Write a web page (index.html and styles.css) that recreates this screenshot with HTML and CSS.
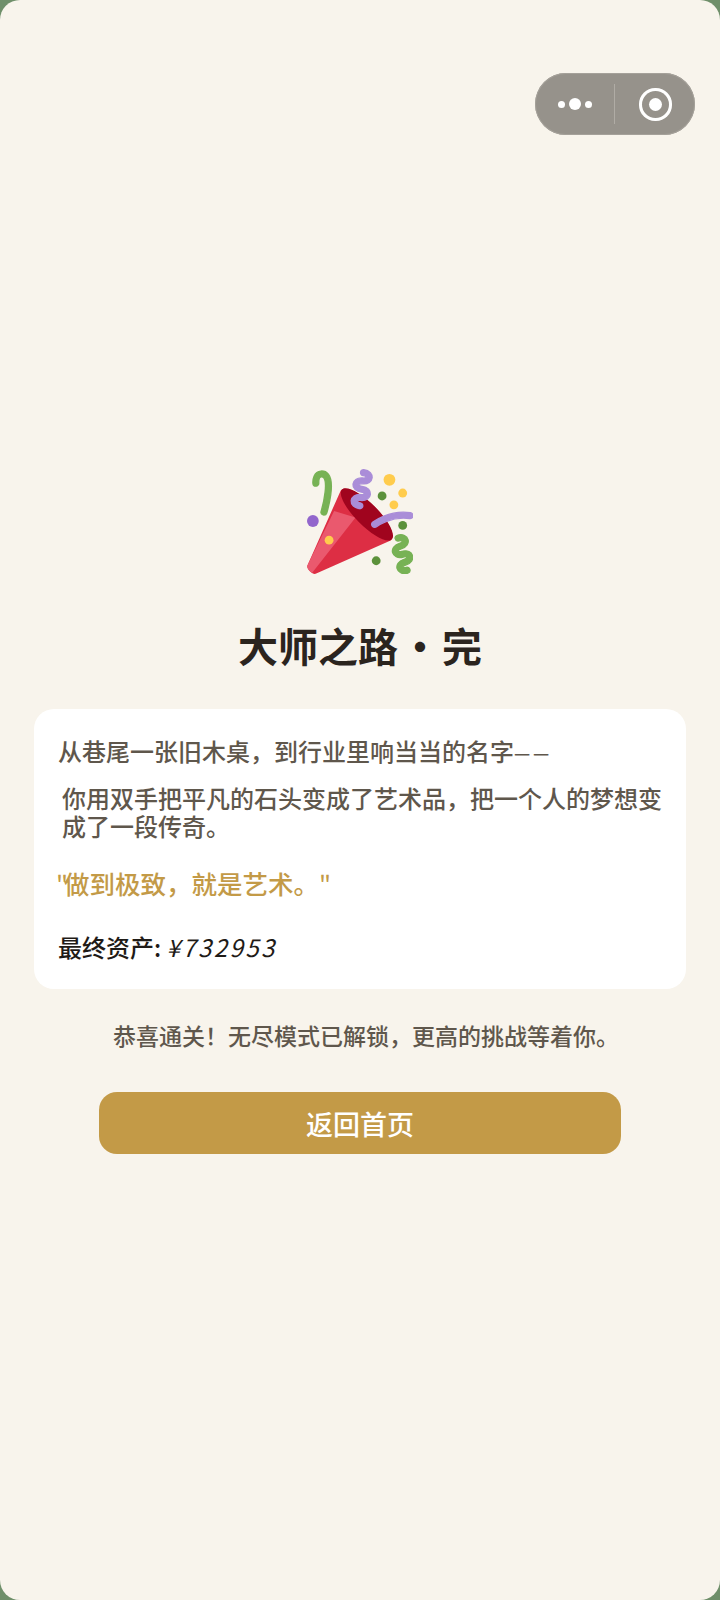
FILE: index.html
```html
<!DOCTYPE html>
<html>
<head>
  <meta charset="utf-8">
  <title>大师之路</title>
  <link rel="stylesheet" href="styles.css">
</head>
<body>
  <div class="screen">
    <div class="capsule">
      <div class="capsule-menu">
        <span class="dot"></span>
        <span class="dot dot-big"></span>
        <span class="dot"></span>
      </div>
      <div class="capsule-line"></div>
      <div class="capsule-close">
        <span class="close-inner"></span>
      </div>
    </div>

    <main class="content">
      <svg class="popper" viewBox="0 0 36 36">
        <path fill="#DD2E44" d="M11.626 7.488c-.112.112-.197.247-.268.395l-.008-.008L.134 33.141l.011.011c-.208.403.14 1.223.853 1.937.713.713 1.533 1.061 1.936.853l.01.01L28.21 24.735l-.008-.009c.147-.07.282-.155.395-.269 1.562-1.562-.971-6.627-5.656-11.313-4.687-4.686-9.752-7.218-11.315-5.656z"/>
        <path fill="#EA596E" d="M9.2 14.6L.416 32.506l-.282.635.011.011c-.208.403.14 1.223.853 1.937.232.232.473.408.709.557L16.5 16.8z"/>
        <path fill="#A0041E" d="M23.012 13.066c4.67 4.672 7.263 9.652 5.789 11.124-1.473 1.474-6.453-1.118-11.126-5.788-4.671-4.672-7.263-9.654-5.79-11.127 1.474-1.473 6.454 1.119 11.127 5.791z"/>
        <path class="streamer" fill="#AA8DD8" stroke="#AA8DD8" d="M18.59 13.609c-.199.161-.459.245-.734.215-.868-.094-1.598-.396-2.109-.873-.541-.505-.808-1.183-.735-1.862.128-1.192 1.324-2.286 3.363-2.066.793.085 1.147-.17 1.159-.292.014-.121-.277-.446-1.07-.532-.868-.094-1.598-.396-2.11-.873-.541-.505-.809-1.183-.735-1.862.13-1.192 1.325-2.286 3.362-2.065.578.062.883-.057 1.012-.134.103-.063.144-.123.148-.158.012-.121-.275-.446-1.07-.532-.549-.06-.947-.552-.886-1.102.059-.549.55-.946 1.101-.886 2.037.219 2.973 1.542 2.844 2.735-.13 1.194-1.325 2.286-3.364 2.067-.578-.063-.88.057-1.01.134-.103.062-.145.123-.149.157-.013.122.276.446 1.071.532 2.037.22 2.973 1.542 2.844 2.735-.129 1.192-1.324 2.286-3.362 2.065-.578-.062-.882.058-1.012.134-.104.064-.144.124-.148.158-.013.121.276.446 1.07.532.548.06.947.553.886 1.102-.028.274-.167.511-.366.671z"/>
        <path class="streamer" fill="#77B255" stroke="#77B255" d="M30.661 22.857c1.973-.557 3.334.323 3.658 1.478.324 1.154-.378 2.615-2.35 3.17-.77.216-1.001.584-.97.701.034.118.425.312 1.193.095 1.972-.555 3.333.325 3.657 1.479.326 1.155-.378 2.614-2.351 3.17-.769.216-1.001.585-.967.702.033.117.423.311 1.192.095.53-.149 1.084.16 1.233.691.148.532-.161 1.084-.693 1.234-1.971.555-3.333-.323-3.659-1.479-.324-1.154.379-2.613 2.353-3.169.77-.217 1.001-.584.967-.702-.032-.117-.422-.312-1.19-.096-1.974.556-3.334-.322-3.659-1.479-.325-1.154.378-2.613 2.351-3.17.768-.215.999-.585.967-.701-.034-.118-.423-.312-1.192-.096-.532.15-1.083-.16-1.233-.691-.149-.53.161-1.082.693-1.232z"/>
        <path class="streamer" fill="#AA8DD8" stroke="#AA8DD8" d="M23.001 20.16c-.294 0-.584-.129-.782-.375-.345-.432-.274-1.061.156-1.406.218-.175 5.418-4.259 12.767-3.208.547.078.927.584.849 1.131-.078.546-.58.93-1.132.848-6.493-.922-11.187 2.754-11.233 2.791-.186.148-.406.219-.625.219z"/>
        <path class="streamer" fill="#77B255" stroke="#77B255" d="M5.754 16c-.095 0-.192-.014-.288-.042-.529-.159-.829-.716-.67-1.245 1.133-3.773 2.16-9.794.898-11.364-.141-.178-.354-.353-.842-.316-.938.072-.849 2.051-.848 2.071.042.551-.372 1.031-.922 1.072-.559.034-1.031-.372-1.072-.923-.103-1.379.326-4.035 2.692-4.214 1.056-.08 1.933.287 2.552 1.057 2.371 2.951-.036 11.506-.542 13.192-.13.433-.528.712-.958.712z"/>
        <circle fill="#5C913B" cx="25.5" cy="9.5" r="1.5"/>
        <circle fill="#9266CC" cx="2" cy="18" r="2"/>
        <circle fill="#5C913B" cx="32.5" cy="19.5" r="1.5"/>
        <circle fill="#5C913B" cx="23.5" cy="31.5" r="1.5"/>
        <circle fill="#FFCC4D" cx="28" cy="4" r="2"/>
        <circle fill="#FFCC4D" cx="32.5" cy="8.5" r="1.5"/>
        <circle fill="#FFCC4D" cx="29.5" cy="12.5" r="1.5"/>
        <circle fill="#FFCC4D" cx="7.5" cy="24.5" r="1.5"/>
      </svg>

      <h1 class="title">大师之路 · 完</h1>

      <section class="card">
        <p class="lead">从巷尾一张旧木桌，到行业里响当当的名字<span class="dash">—</span><span class="dash">—</span></p>
        <p class="story">你用双手把平凡的石头变成了艺术品，把一个人的梦想变成了一段传奇。</p>
        <p class="quote"><span class="quote-mark">"</span>做到极致，就是艺术。<span class="quote-mark">"</span></p>
        <p class="assets"><span class="assets-label">最终资产:</span> <span class="assets-value">¥732953</span></p>
      </section>

      <p class="hint">恭喜通关！无尽模式已解锁，更高的挑战等着你。</p>

      <button class="home-btn">返回首页</button>
    </main>
  </div>
</body>
</html>
```

FILE: styles.css
```css
:root {
  --bg: #f8f4ec;
  --gold: #c39a47;
  --text: #5f574c;
  --dark: #2b241e;
  --font: "Noto Sans CJK SC", "Noto Sans", sans-serif;
}
html, body {
  margin: 0;
  padding: 0;
}
body {
  font-family: var(--font);
  background-color: #6f8f6a;
}
.screen {
  position: relative;
  height: 1600px;
  background-color: var(--bg);
  border-radius: 20px;
  overflow: hidden;
}
.capsule {
  position: absolute;
  top: 73px;
  right: 25px;
  width: 160px;
  height: 62px;
  display: flex;
  align-items: center;
  background-color: #96928b;
  border-radius: 31px;
  box-shadow: inset 0 0 0 1px #a5a19a;
}
.capsule-menu {
  width: 79px;
  display: flex;
  justify-content: center;
  align-items: center;
  gap: 4px;
}
.dot {
  width: 7px;
  height: 7px;
  border-radius: 50%;
  background-color: #fff;
}
.dot-big {
  width: 12px;
  height: 12px;
}
.capsule-line {
  width: 1px;
  height: 40px;
  background-color: #b0aca5;
}
.capsule-close {
  flex: 1;
  display: flex;
  justify-content: center;
  align-items: center;
}
.close-inner {
  width: 13px;
  height: 13px;
  border-radius: 50%;
  background-color: #fff;
  box-shadow: 0 0 0 7px #96928b, 0 0 0 10px #fff;
}
.content {
  display: flex;
  flex-direction: column;
  align-items: center;
  padding: 468px 34px 0;
}
.popper {
  width: 106px;
  height: 106px;
  display: block;
}
.streamer {
  stroke-width: 0.45;
  stroke-linejoin: round;
}
.title {
  margin: 43px 0 0;
  font-size: 40px;
  line-height: 56px;
  font-weight: 700;
  word-spacing: -7px;
  color: var(--dark);
}
.card {
  width: 100%;
  height: 280px;
  margin-top: 36px;
  box-sizing: border-box;
  padding: 27px 24px 0;
  background-color: #fff;
  border-radius: 20px;
}
.card p {
  margin: 0;
  font-size: 24px;
  line-height: 30px;
  font-weight: 500;
  color: var(--text);
}
.dash {
  display: inline-block;
  width: 19px;
  font-size: 18px;
  line-height: 0;
  vertical-align: 1px;
}
.card .story {
  margin-top: 18px;
  padding-left: 4px;
  line-height: 28px;
}
.card .quote {
  margin-top: 28px;
  margin-left: -2px;
  color: var(--gold);
  font-size: 25.5px;
}
.quote-mark {
  font-weight: 400;
  letter-spacing: -4px;
}
.card .assets {
  margin-top: 34px;
  color: #1f1b17;
}
.assets-value {
  font-weight: 400;
  font-style: italic;
  letter-spacing: 2.4px;
}
.hint {
  margin: 30px 0 0;
  padding-left: 12px;
  font-size: 23px;
  line-height: 32px;
  font-weight: 500;
  color: var(--text);
}
.home-btn {
  width: 522px;
  height: 62px;
  margin-top: 41px;
  border: none;
  border-radius: 18px;
  background-color: var(--gold);
  color: #fff;
  font-family: var(--font);
  font-size: 27px;
  font-weight: 500;
}
```
